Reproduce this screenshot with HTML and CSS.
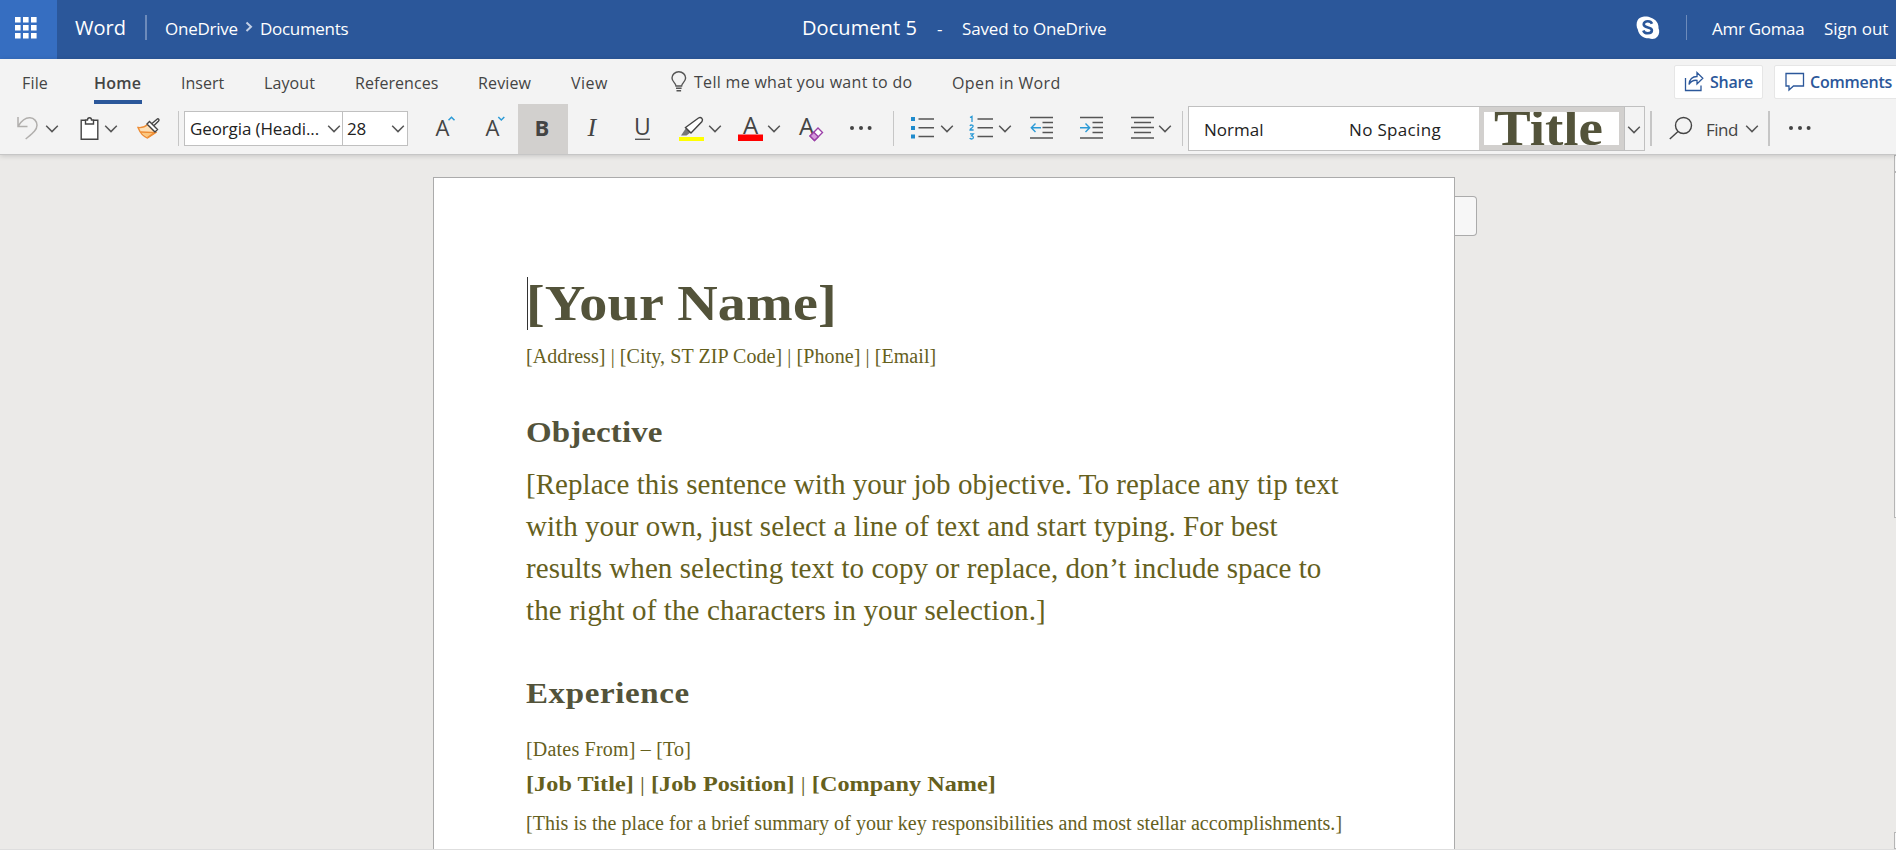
FILE: index.html
```html
<!DOCTYPE html>
<html lang="en">
<head>
<meta charset="utf-8">
<title>Document 5 - Word</title>
<link rel="stylesheet" href="styles.css">
</head>
<body>
<svg class="defs" width="0" height="0">
  <symbol id="chev" viewBox="0 0 14 50"><path d="M1.2 21.8 7 27.6 12.8 21.8" fill="none" stroke="#555" stroke-width="1.5"/></symbol>
  <symbol id="dots" viewBox="0 0 24 50"><circle cx="3" cy="24" r="2"/><circle cx="12" cy="24" r="2"/><circle cx="20.6" cy="24" r="2"/></symbol>
</svg>

<header class="top">
  <div class="waffle">
    <svg width="22" height="22" fill="#fff"><path d="M0 0h5.6v5.6H0zM8 0h5.6v5.6H8zM16 0h5.6v5.6H16zM0 8h5.6v5.6H0zM8 8h5.6v5.6H8zM16 8h5.6v5.6H16zM0 16h5.6v5.6H0zM8 16h5.6v5.6H8zM16 16h5.6v5.6H16z"/></svg>
  </div>
  <span class="app">Word</span>
  <i class="rule"></i>
  <nav class="crumbs"><span class="c1">OneDrive</span><svg width="8" height="12" fill="none" stroke="#c3d0e6" stroke-width="2"><path d="M1.5 1.5 6 5.8 1.5 10"/></svg><span class="c2">Documents</span></nav>
  <div class="doc"><span class="docname">Document 5</span><span class="dash">-</span><span class="saved">Saved to OneDrive</span></div>
  <svg class="skype" width="24" height="24"><path d="M7 .7C10 .2 13 .7 15 1.7c5 1.6 8 6 7.5 10.5 1.300 2.500.8 6-1 8.300-2 2.600-5.500 3.200-8.500 1.800C7.500 22.500 2.800 19 1.800 13.500.3 11 .200 7 1.500 4.500 2.500 2.300 4.500 1 7 .7z" fill="#fff"/><path d="M16 7.800c-.6-1.700-2.200-2.500-4.200-2.500-2.300 0-4.100 1-4.100 3 0 4.400 8.200 2 8.200 6 0 1.900-1.800 3-4.100 3-2.200 0-3.900-.9-4.500-2.800" fill="none" stroke="#2b579a" stroke-width="2.600"/></svg>
  <i class="rule thin"></i>
  <span class="user">Amr Gomaa</span>
  <span class="signout">Sign out</span>
</header>

<section class="ribbon">
  <div class="tabs">
    <span class="t-file">File</span><span class="t-home">Home</span><span class="t-insert">Insert</span><span class="t-layout">Layout</span><span class="t-ref">References</span><span class="t-review">Review</span><span class="t-view">View</span>
    <svg class="bulb" width="16" height="22" fill="none" stroke="#555" stroke-width="1.400"><path d="M5 15c0-3-4-4-4-8a6.800 6.200 0 0 1 13.600 0c0 4-4 5-4 8zM5 17.300h5.600M5.500 19.800h4.600"/></svg>
    <span class="t-tell">Tell me what you want to do</span><span class="t-open">Open in Word</span>
    <div class="btn share"><svg width="20" height="22" fill="none" stroke="#2b579a" stroke-width="1.300"><path d="M1.500 7v12.500h15.500V14.500"/><path d="M5 13.500C5.500 8.500 8 5.500 13 5.500V1.500l5.800 5.800L13 13V9.300C9 9 6.500 10.500 5 13.500z"/></svg><span>Share</span></div>
    <div class="btn comments"><svg width="20" height="20" fill="none" stroke="#2b579a" stroke-width="1.300"><path d="M1 1.500h17.500v12.500H8.500L4 18V14H1z"/></svg><span>Comments</span></div>
  </div>

  <div class="tools">
    <svg class="undo" width="26" height="50" viewBox="14 104 26 50" fill="none" stroke="#b1afad" stroke-width="1.500"><path d="M18 117v9.500h9.500M18.300 126C22 120 26 117.500 30 117.800c4 .3 7 3.400 7 7.400 0 5-5 8.500-11.300 13.800"/></svg>
    <svg class="cv g5" width="14" height="50"><use href="#chev"/></svg>
    <svg class="clip" width="20" height="50" viewBox="80 104 20 50" fill="none" stroke="#444" stroke-width="1.400"><path d="M85.500 120.300H81.200v18.900h16.600v-18.900h-4.300M85.500 120v4h8v-4h-2c0-3-4-3-4 0z" fill="#fff"/></svg>
    <svg class="cv g4" width="14" height="50"><use href="#chev"/></svg>
    <svg class="brush" width="26" height="50" viewBox="136 104 26 50" fill="none" stroke-width="1.400"><path d="M138 127.500c4 .5 7-.5 9.500-3l8.500 8-8.500 5.500c-5-2-7.500-5.500-9.500-10.500z" fill="#fce0b8" stroke="#ee8d35"/><path d="m141 132 13.500.5-7 5" fill="#fbc77f" stroke="#ee8d35"/><path d="m147 124 2.500-2.500 8 8-2.500 2.500zM152 123.500l5-4.300c1.300-1 2.700.7 1.600 1.800l-4.600 4.500" fill="#fff" stroke="#444"/></svg>
    <i class="bar s1"></i>
    <div class="fontbox"><span class="fname">Georgia (Headi...</span><svg class="fc" width="14" height="33"><use href="#chev" y="-8" width="14" height="50"/></svg><span class="fsize">28</span><svg class="fc2" width="14" height="33"><use href="#chev" y="-8" width="14" height="50"/></svg></div>
    <svg class="grow" width="22" height="50" viewBox="435 104 22 50"><text class="ltr" x="435.600" y="136">A</text><path d="m448.500 120.300 3-3 3 3" fill="none" stroke="#2b9ad6" stroke-width="1.500"/></svg>
    <svg class="shrink" width="22" height="50" viewBox="485 104 22 50"><text class="ltr" x="485.600" y="136">A</text><path d="m498.300 117 3 3 3-3" fill="none" stroke="#2b9ad6" stroke-width="1.500"/></svg>
    <svg class="bold" width="50" height="50" viewBox="518 104 50 50"><text class="ltr b" x="534.500" y="136">B</text></svg>
    <svg class="ital" width="22" height="50" viewBox="580 104 22 50"><text class="ltr i" x="587.500" y="136">I</text></svg>
    <svg class="under" width="20" height="50" viewBox="633 104 20 50"><text class="ltr u" x="634" y="135">U</text><path d="M635 139.300h15" stroke="#555" stroke-width="1.400"/></svg>
    <svg class="hl" width="26" height="50" viewBox="679 104 26 50"><path d="M679 137h25v4h-25z" fill="#ff0"/><path d="m681 135.500 5-7.500 4.500 4.500-4 3z" fill="#777"/><path d="m685.500 127.500 13-9.500c2.500-1.500 5 1 3.500 3.500L691 133z" fill="#fff" stroke="#444" stroke-width="1.400"/></svg>
    <svg class="cv g3" width="14" height="50"><use href="#chev"/></svg>
    <svg class="fcol" width="26" height="50" viewBox="738 104 26 50"><text class="ltr a" x="743" y="133.500">A</text><path d="M738 134.500h25v6.500h-25z" fill="red"/></svg>
    <svg class="cv g3" width="14" height="50"><use href="#chev"/></svg>
    <svg class="clear" width="26" height="50" viewBox="799 104 26 50"><text class="ltr a" x="799" y="135">A</text><path d="m810 136 8-8 4.500 4.500-8 8z" fill="#fff" stroke="#9b3fa8" stroke-width="1.400"/><path d="m810 136 3.800-3.800 4.500 4.500-3.800 3.800z" fill="#d59bdb" stroke="#9b3fa8" stroke-width="1.400"/></svg>
    <svg class="more" width="24" height="50" fill="#444"><use href="#dots"/></svg>
    <i class="bar s2"></i>
    <svg class="bul" width="24" height="50" viewBox="911 104 24 50"><path d="M911 117h4v4h-4zM911 126h4v4h-4zM911 134.500h4v4h-4z" fill="#1e8bcd"/><path d="M918.500 119H934M918.500 127.700H934M918.500 136.500H934" stroke="#555" stroke-width="1.400"/></svg>
    <svg class="cv g6" width="14" height="50"><use href="#chev"/></svg>
    <svg class="num" width="25" height="50" viewBox="969 104 25 50" fill="none" stroke="#2b9ad6" stroke-width="1.300"><path d="M970 117.500 972 116.300v5.700M970 126c.5-1.500 3.600-1.200 3 .6-.3 1-3 2.200-3 3.400h3.600M970 133.800h3.300l-1.700 2c2.600.2 2.200 3.200 0 3.200-1 0-1.600-.3-1.900-.8"/><path d="M977.500 119H993M977.500 127.700H993M977.500 136.500H993" stroke="#555" stroke-width="1.400"/></svg>
    <svg class="cv g4" width="14" height="50"><use href="#chev"/></svg>
    <svg class="out" width="25" height="50" viewBox="1029 104 25 50" fill="none" stroke="#555" stroke-width="1.400"><path d="M1030 117.500h23M1042.500 122.500H1053M1042.500 127.500H1053M1042.500 132.500H1053M1030 138h23"/><path d="M1041 127.700H1031.500M1035.500 123.500l-4.200 4.200 4.200 4.200" stroke="#2b9ad6"/></svg>
    <svg class="in" width="25" height="50" viewBox="1079 104 25 50" fill="none" stroke="#555" stroke-width="1.400"><path d="M1080 117.500h23M1092.500 122.500H1103M1092.500 127.500H1103M1092.500 132.500H1103M1080 138h23"/><path d="M1080 127.700H1089.500M1085.500 123.500l4.200 4.200-4.200 4.200" stroke="#2b9ad6"/></svg>
    <svg class="al" width="25" height="50" viewBox="1130 104 25 50" stroke="#555" stroke-width="1.400"><path d="M1131 117.500h23M1134 122.500h17M1131 127.500h23M1134 132.500h17M1131 138h23"/></svg>
    <svg class="cv g3" width="14" height="50"><use href="#chev"/></svg>
    <i class="bar s3"></i>
    <div class="gallery"><span class="st1">Normal</span><span class="st2">No Spacing</span><div class="tile"><div class="tile-in"><span class="wide-face">Title</span></div></div><div class="drop"><svg width="14" height="42"><use href="#chev" y="-2" width="14" height="50"/></svg></div></div>
    <i class="bar wide s4"></i>
    <svg class="find" width="25" height="50" viewBox="1669 104 25 50" fill="none" stroke="#444" stroke-width="1.400"><circle cx="1683.500" cy="125.500" r="8"/><path d="M1678 131.500 1669.800 139"/></svg>
    <span class="findt">Find</span>
    <svg class="cv g7" width="14" height="50"><use href="#chev"/></svg>
    <i class="bar wide s5"></i>
    <svg class="more2" width="24" height="50" fill="#444"><use href="#dots"/></svg>
  </div>
</section>

<main class="canvas">
  <article class="page">
    <h1 class="name wide-face">[Your Name]</h1>
    <p class="small addr">[Address] | [City, ST ZIP Code] | [Phone] | [Email]</p>
    <h2 class="head obj wide-face">Objective</h2>
    <p class="body">[Replace this sentence with your job objective. To replace any tip text<br>with your own, just select a line of text and start typing. For best<br>results when selecting text to copy or replace, don’t include space to<br><span class="last">the right of the characters in your selection.]</span></p>
    <h2 class="head exp wide-face">Experience</h2>
    <p class="small dates">[Dates From] – [To]</p>
    <h3 class="job wide-face">[Job Title] <span class="pipe">|</span> [Job Position] <span class="pipe">|</span> [Company Name]</h3>
    <p class="small summary">[This is the place for a brief summary of your key responsibilities and most stellar accomplishments.]</p>
    <i class="caret"></i>
  </article>
  <div class="flap"></div>
  <div class="scroll"><i class="up"></i><i class="thumb"></i><i class="down"></i></div>
</main>
</body>
</html>
```
FILE: styles.css
```css
* { box-sizing: border-box; }
html, body { margin: 0; height: 100%; overflow: hidden; background: #fff; }
body { font-family: "Open Sans", sans-serif; color: #444; }
svg { display: block; flex: none; overflow: visible; }
.defs { position: absolute; }
span, i, div { flex: none; white-space: nowrap; }

/* title bar */
.top { height: 59px; display: flex; background: #2b579a; color: #fff; font-size: 17px; line-height: 57px; }
.waffle { width: 57px; height: 59px; background: #366ec1; padding: 17px 0 0 15px; }
.app { font-size: 20px; line-height: 55px; letter-spacing: 0; margin-left: 18px; width: 70px; }
.rule { width: 2px; height: 25px; margin-top: 15px; background: #6d8bbb; }
.thin { width: 1px; margin-left: 26px; }
.crumbs { display: flex; margin-left: 18px; width: 637px; }
.c1 { letter-spacing: -.25px; width: 80px; }
.crumbs svg { margin-top: 21px; }
.c2 { letter-spacing: -.3px; margin-left: 7px; }
.doc { display: flex; width: 834px; }
.docname { font-size: 20px; line-height: 55px; width: 135px; letter-spacing: .08px; }
.dash { width: 25px; }
.saved { letter-spacing: -.16px; }
.skype { margin-top: 16px; }
.user { margin-left: 25px; width: 112px; letter-spacing: -.3px; }

/* ribbon */
.ribbon { height: 96px; background: #f3f3f3; border-bottom: 1px solid #c6c6c6; box-shadow: 0 1px 5px rgba(0,0,0,.16); position: relative; z-index: 1; }
.tabs { display: flex; height: 45px; font-size: 16px; line-height: 48px; }
.t-file { margin-left: 22px; width: 72px; letter-spacing: .17px; }
.t-home { width: 48px; height: 45px; margin-right: 39px; font-weight: 600; letter-spacing: .25px; border-bottom: 4px solid #2b579a; }
.t-insert { width: 83px; }
.t-layout { width: 91px; letter-spacing: .1px; }
.t-ref { width: 123px; letter-spacing: .05px; }
.t-review { width: 93px; letter-spacing: .15px; }
.t-view { width: 100px; letter-spacing: .5px; }
.bulb { margin-top: 12px; }
.t-tell { margin-left: 7px; width: 258px; letter-spacing: .3px; line-height: 47px; }
.t-open { width: 722px; letter-spacing: .4px; }
.btn { display: flex; height: 34px; margin-top: 6px; background: #fff; border: 1px solid #e6e6e6; border-radius: 2px; color: #2b579a; font-weight: 600; line-height: 33px; }
.share { width: 89px; padding: 5px 0 0 9px; letter-spacing: -.27px; }
.share span { margin: -5px 0 0 6px; }
.comments { width: 130px; margin-left: 11px; padding: 6px 0 0 10px; letter-spacing: -.24px; }
.comments span { margin: -6px 0 0 5px; }

.tools { display: flex; height: 50px; padding-left: 14px; }
.g3 { margin-left: 3px; }
.g4 { margin-left: 4px; }
.g5, .g6 { margin-left: 5px; }
.g7 { margin-left: 7px; }
.clip { margin-left: 21px; }
.brush { margin-left: 18px; }
.bar { width: 1px; height: 35px; margin-top: 7px; background: #c6c6c6; }
.bar.wide { width: 2px; }
.s1 { margin-left: 16px; }
.fontbox { display: flex; width: 224px; height: 35px; margin: 7px 0 0 5px; background: #fff; border: 1px solid #c0c0c0; color: #222; font-size: 17px; line-height: 34px; }
.fname { padding-left: 5px; width: 142px; letter-spacing: -.12px; }
.fsize { width: 49px; height: 33px; padding-left: 4px; margin-left: 1px; border-left: 1px solid #c0c0c0; letter-spacing: -.2px; }
.grow { margin-left: 27px; }
.shrink { margin-left: 28px; }
.bold { margin-left: 11px; background: #d2d0ce; }
.ital { margin-left: 12px; }
.under { margin-left: 31px; }
.hl { margin-left: 26px; }
.fcol { margin-left: 16px; }
.clear { margin-left: 18px; }
.more { margin-left: 24px; }
.s2 { margin-left: 20px; }
.bul { margin-left: 17px; }
.num { margin-left: 15px; }
.out { margin-left: 17px; }
.in { margin-left: 25px; }
.al { margin-left: 26px; }
.s3 { margin-left: 10px; }
.ltr { font: 22px "Open Sans", sans-serif; fill: #444; }
.ltr.a { font-size: 24px; }
.ltr.b { font-weight: 700; }
.ltr.i { font: italic 26px "Liberation Serif", serif; }
.ltr.u { font-size: 23px; }
.gallery { display: flex; width: 457px; height: 45px; margin: 2px 0 0 5px; background: #fff; border: 1px solid #c0c0c0; color: #222; font-size: 17px; line-height: 46px; }
.st1 { margin-left: 15px; width: 145px; }
.st2 { width: 130px; letter-spacing: .33px; }
.tile { width: 145px; height: 43px; padding: 5px; background: #d2d0ce; }
.tile-in { height: 33px; overflow: hidden; background: #fff; padding-left: 10px; font: 700 50px/32px "Liberation Serif", serif; color: #53533a; }
.tile-in span { display: inline-block; }
.drop { width: 20px; height: 43px; padding-left: 2px; background: #f3f3f3; border-left: 1px solid #c0c0c0; }
.s4 { margin-left: 5px; }
.find { margin-left: 17px; }
.findt { margin-left: 12px; width: 32px; font-size: 17px; line-height: 52px; letter-spacing: -.5px; }
.s5 { margin-left: 9px; }
.more2 { margin-left: 18px; }

/* document canvas */
.canvas { position: relative; display: flex; height: 695px; padding: 22px 0 0 433px; background: #ebeae8; border-bottom: 1px solid #dedede; overflow: hidden; }
.page { position: relative; width: 1022px; height: 900px; padding: 98px 0 0 92px; background: #fff; border: 1px solid #ababab; font-family: "Liberation Serif", serif; color: #65601d; white-space: nowrap; flex: none; }
h1, h2, h3, p { margin: 0; }
.wide-face { transform: scaleX(1.1); transform-origin: 0 50%; }
.name { font-size: 51px; line-height: 55px; letter-spacing: .15px; color: #53533a; }
.small { font-size: 20px; line-height: 26px; }
.addr { margin-top: 12px; letter-spacing: .08px; }
.head { font-size: 30px; line-height: 36px; color: #53533a; }
.obj { margin-top: 45px; letter-spacing: .1px; }
.body { margin-top: 13px; font-size: 29px; line-height: 42px; letter-spacing: .05px; }
.last { letter-spacing: .13px; }
.exp { margin-top: 44px; letter-spacing: .55px; }
.dates { margin-top: 25px; letter-spacing: .2px; }
.job { margin-top: 8px; font-size: 22px; line-height: 28px; letter-spacing: .04px; }
.pipe { font-weight: 400; }
.summary { margin-top: 12px; letter-spacing: .04px; }
.caret { position: absolute; left: 93px; top: 99px; width: 1px; height: 53px; background: #333; }
.flap { width: 22px; height: 40px; margin-top: 19px; border: 1px solid #ababab; border-left: 0; border-radius: 0 4px 4px 0; background: #f7f7f7; }
.scroll { position: absolute; top: 0; right: 0; width: 2px; height: 694px; display: flex; flex-direction: column; }
.scroll i { border: 1px solid #b5b5b5; border-right: 0; background: #f7f7f7; }
.up { height: 17px; }
.thumb { height: 346px; }
.down { height: 17px; margin-top: auto; }
```
